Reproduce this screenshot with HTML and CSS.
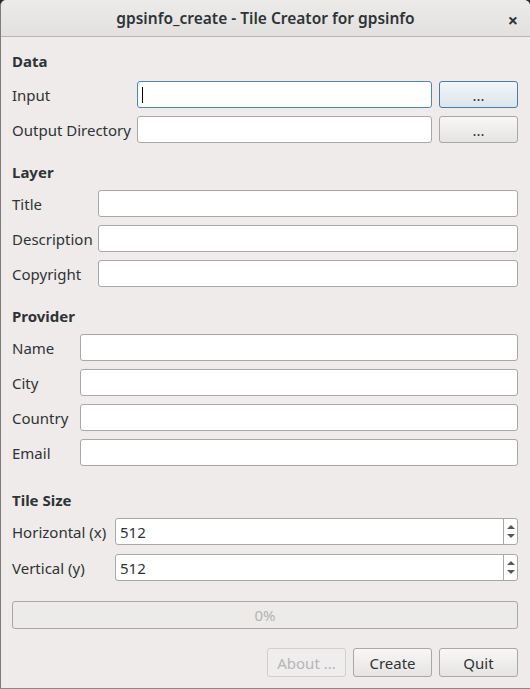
FILE: index.html
```html
<!DOCTYPE html>
<html>
<head>
<meta charset="utf-8">
<link rel="stylesheet" href="styles.css">
</head>
<body>
<div class="window">
  <div class="titlebar">
    <span class="title">gpsinfo_create - Tile Creator for gpsinfo</span>
    <span class="close">×</span>
  </div>
  <div class="content">
    <section class="section sec-data">
      <div class="header">Data</div>
      <div class="grid">
        <label>Input</label>
        <div class="field-row">
          <div class="field focus"><span class="caret"></span></div>
          <button class="btn focus-btn">...</button>
        </div>
        <label>Output Directory</label>
        <div class="field-row">
          <div class="field"></div>
          <button class="btn">...</button>
        </div>
      </div>
    </section>

    <section class="section sec-layer">
      <div class="header">Layer</div>
      <div class="grid">
        <label>Title</label><div class="field"></div>
        <label>Description</label><div class="field"></div>
        <label>Copyright</label><div class="field"></div>
      </div>
    </section>

    <section class="section sec-provider">
      <div class="header">Provider</div>
      <div class="grid">
        <label>Name</label><div class="field"></div>
        <label>City</label><div class="field"></div>
        <label>Country</label><div class="field"></div>
        <label>Email</label><div class="field"></div>
      </div>
    </section>

    <section class="section sec-tile">
      <div class="header">Tile Size</div>
      <div class="grid">
        <label>Horizontal (x)</label>
        <div class="field spin"><span class="value">512</span><span class="arrows"><span class="up"></span><span class="down"></span></span></div>
        <label>Vertical (y)</label>
        <div class="field spin"><span class="value">512</span><span class="arrows"><span class="up"></span><span class="down"></span></span></div>
      </div>
    </section>

    <div class="progress">0%</div>

    <div class="buttons">
      <button class="btn wide disabled">About ...</button>
      <button class="btn wide">Create</button>
      <button class="btn wide">Quit</button>
    </div>
  </div>
</div>
</body>
</html>
```

FILE: styles.css
```css
html, body {
  margin: 0;
  padding: 0;
  background: #2b2b2b;
}
body {
  font-family: "Noto Sans", "Open Sans", sans-serif;
  font-size: 15px;
  color: #2e3436;
}
.window {
  width: 529px;
  height: 688px;
  background: #eeebea;
  border-left: 1px solid #7d7d7b;
  border-bottom: 1px solid #8a8a88;
  border-radius: 6px 6px 0 0;
  overflow: hidden;
  display: flex;
  flex-direction: column;
}
.titlebar {
  height: 36px;
  flex: none;
  border-bottom: 1px solid #b6b6b3;
  background: linear-gradient(#ecebea, #e2e1df);
  display: flex;
  align-items: center;
  justify-content: center;
  position: relative;
}
.title {
  font-weight: 600;
  font-size: 15.5px;
  color: #2e3436;
}
.close {
  position: absolute;
  right: 12px;
  top: 8px;
  font-size: 18px;
  font-weight: 700;
  color: #2e3436;
}
.content {
  padding: 16px 12px 0 11px;
  display: flex;
  flex-direction: column;
}
.header {
  font-weight: 700;
  line-height: 17px;
  height: 17px;
  margin-bottom: 9px;
}
.sec-data .header {
  margin-bottom: 11px;
}
.section + .section {
  margin-top: 21px;
}
.sec-tile {
  margin-top: 26px !important;
}
.grid {
  display: grid;
  row-gap: 8px;
  align-items: center;
}
.sec-data .grid { grid-template-columns: 125px 1fr; }
.sec-layer .grid { grid-template-columns: 86px 1fr; }
.sec-provider .grid { grid-template-columns: 68px 1fr; }
.sec-tile .grid { grid-template-columns: 103px 1fr; row-gap: 9px; }
label {
  white-space: nowrap;
}
.field-row {
  display: flex;
  gap: 7px;
}
.field {
  flex: 1;
  height: 25px;
  background: #fff;
  border: 1px solid #a8a8a6;
  border-radius: 3px;
  position: relative;
}
.field.focus {
  border-color: #4a85bd;
}
.caret {
  position: absolute;
  left: 4px;
  top: 5px;
  width: 1px;
  height: 16px;
  background: #000;
}
.btn {
  font-family: inherit;
  font-size: 15px;
  color: #2e3436;
  height: 27px;
  width: 79px;
  padding: 0;
  border: 1px solid #a8a8a6;
  border-radius: 3px;
  background: linear-gradient(#f8f7f6, #e6e4e2);
}
.btn.focus-btn {
  border-color: #4a7ca9;
  background: linear-gradient(#f1f6f8, #dbe6eb);
}
.spin {
  display: flex;
  align-items: center;
}
.spin .value {
  flex: 1;
  padding-left: 4px;
}
.arrows {
  width: 13px;
  height: 25px;
  border-left: 1px solid #a8a8a6;
  display: flex;
  flex-direction: column;
  align-items: center;
  justify-content: center;
  gap: 5px;
}
.up {
  width: 0; height: 0;
  border-left: 4px solid transparent;
  border-right: 4px solid transparent;
  border-bottom: 4px solid #55595a;
}
.down {
  width: 0; height: 0;
  border-left: 4px solid transparent;
  border-right: 4px solid transparent;
  border-top: 4px solid #55595a;
}
.progress {
  margin-top: 20px;
  height: 26px;
  border: 1px solid #a8a8a6;
  border-radius: 3px;
  background: #edeaea;
  color: #b3b3b1;
  display: flex;
  align-items: center;
  justify-content: center;
}
.buttons {
  margin-top: 19px;
  display: flex;
  justify-content: flex-end;
  gap: 7px;
}
.btn.wide {
  width: 79px;
  height: 29px;
}
.btn.disabled {
  color: #b6b6b3;
  border-color: #cfcfcd;
  background: #efeded;
}
```
